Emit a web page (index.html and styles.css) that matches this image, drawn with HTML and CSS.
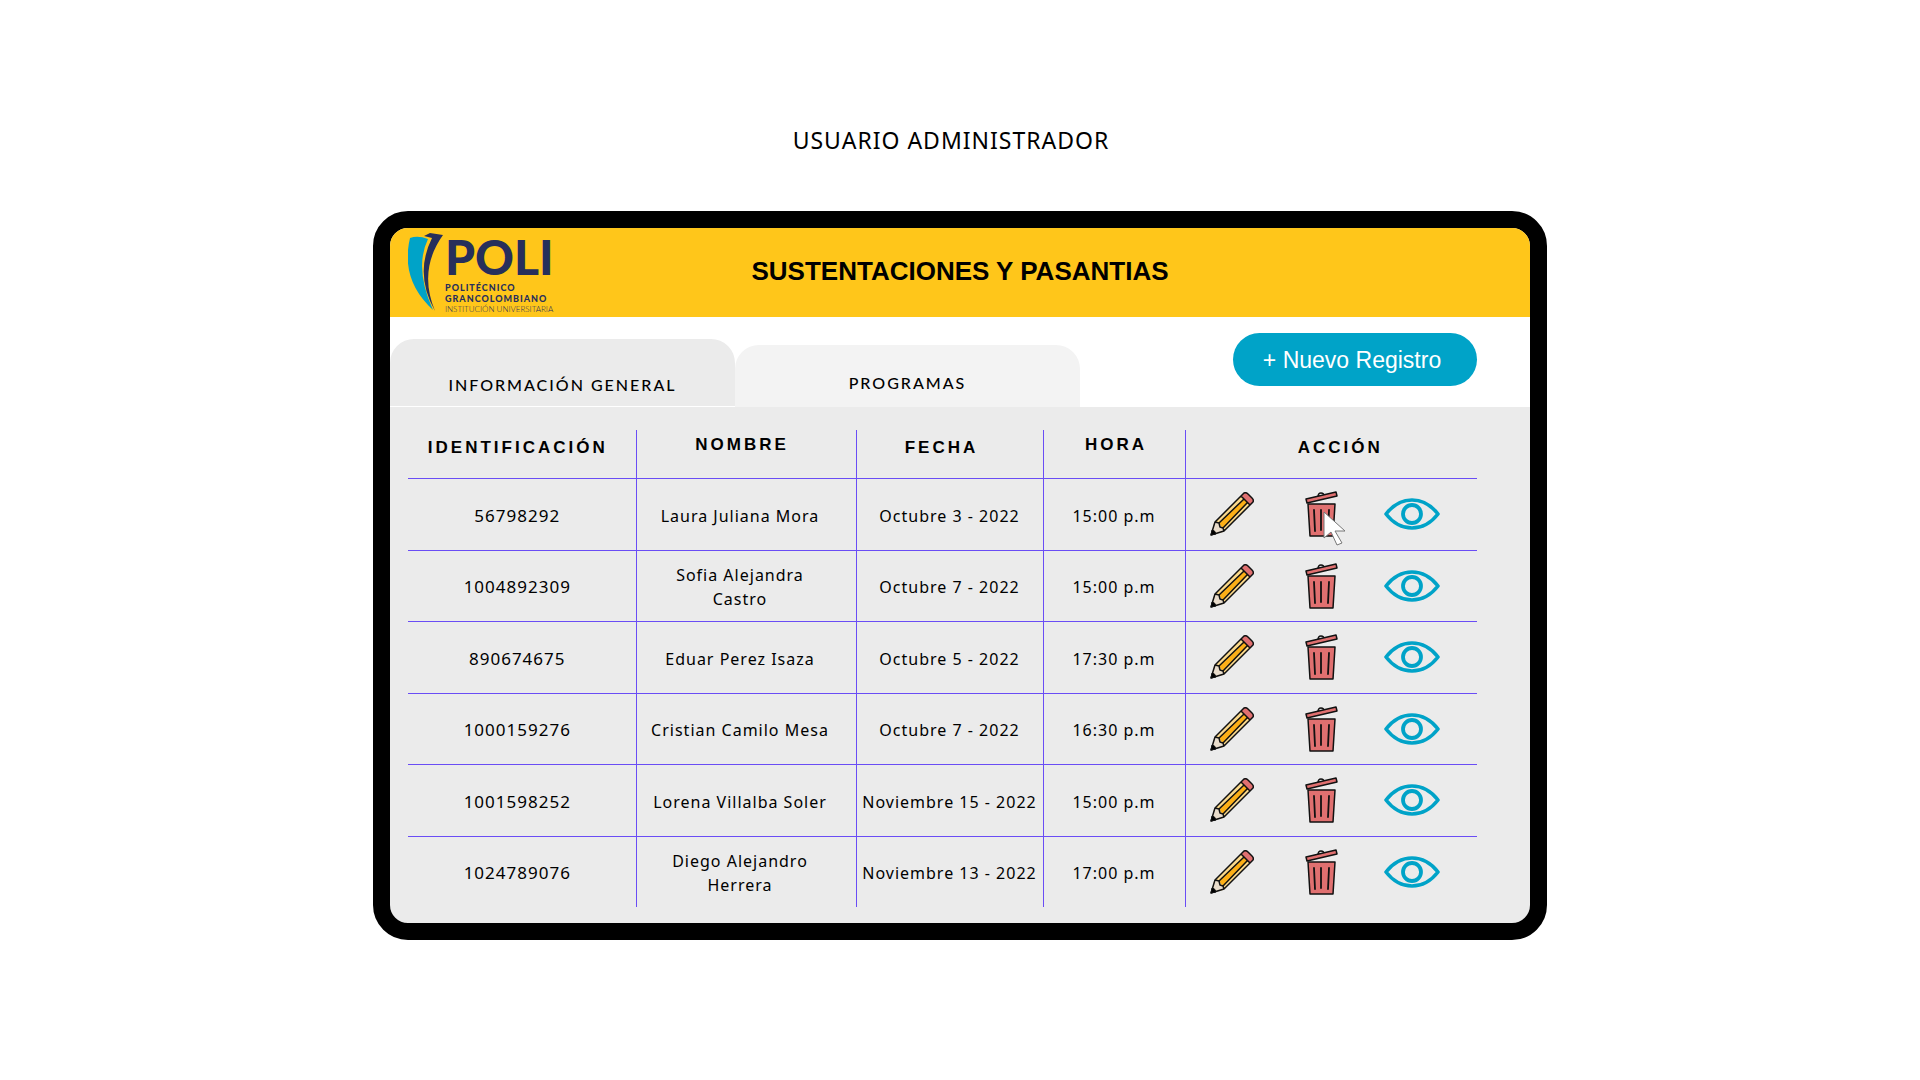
FILE: index.html
```html
<!DOCTYPE html>
<html lang="es">
<head>
<meta charset="utf-8">
<title>Sustentaciones y Pasantias</title>
<link rel="stylesheet" href="styles.css">
</head>
<body>
<svg class="sprite" aria-hidden="true">
  <symbol id="pencil" viewBox="0 0 44 44">
    <path d="M1 43 4 31 31 4 40 13 13 40Z" fill="#fbd98b"/>
    <path d="M9 31 34 7 38 11 13 36Z" fill="#fcaf17"/>
    <path d="M1 43 5 30 9 31 10 35 13 36 14 39Z" fill="#e9dccb"/>
    <path d="M31 4 34 1Q36 0 38 2L42 6Q44 8 43 10L40 13Z" fill="#e07070"/>
    <path d="M1 43 5 30 34 1Q36 0 38 2L42 6Q44 8 43 10L14 39ZM31 4 40 13M34 7 9 31M37 11 13 36M5 30 9 31 10 35 13 36 14 39" fill="none" stroke="#111" stroke-width="1.5" stroke-linejoin="round"/>
    <path d="M1 43 2 38Q5 38 6 42Z" stroke="#111"/>
  </symbol>
  <symbol id="trash" viewBox="0 0 34 46">
    <path d="M13 6Q13 2 16 2T19 5" fill="#fff" stroke="#111" stroke-width="1.5"/>
    <path d="M1 8 31 1 32 5 2 12Z" fill="#e07070" stroke="#111" stroke-width="1.5" stroke-linejoin="round"/>
    <path d="M3 13H30L28 45H5Z" fill="#e07070" stroke="#111" stroke-width="1.5" stroke-linejoin="round"/>
    <path d="M9 19 10 40M16 19V39M24 19 23 40" fill="none" stroke="#111" stroke-width="1.8" stroke-linecap="round"/>
  </symbol>
  <symbol id="eye" viewBox="0 0 56 32">
    <path d="M2 16C9 7 18 2 28 2S47 7 54 16C47 25 38 30 28 30S9 25 2 16Z" fill="none" stroke="#00a3c8" stroke-width="3.6" stroke-linejoin="round"/>
    <circle cx="28" cy="16" r="9" fill="none" stroke="#00a3c8" stroke-width="3.8"/>
  </symbol>
</svg>
<main class="page">
  <h1 class="role">USUARIO ADMINISTRADOR</h1>
  <div class="device">
    <header class="banner">
      <div class="logo">
        <svg class="logo-mark" viewBox="0 0 36 80" aria-hidden="true">
          <path d="M2 6Q10 3 20 7Q6 36 25 78Q-8 48 2 6Z" fill="#00a3c8"/>
          <path d="M16 4 22 1 35 3Q10 38 27 79Q6 42 24 6Z" fill="#272f5b"/>
        </svg>
        <div class="logo-text">
          <span class="logo-name">POLI</span>
          <span class="logo-line">POLITÉCNICO</span>
          <span class="logo-line">GRANCOLOMBIANO</span>
          <span class="logo-small">INSTITUCIÓN UNIVERSITARIA</span>
        </div>
      </div>
      <h2 class="title">SUSTENTACIONES Y PASANTIAS</h2>
    </header>
    <div class="toolbar">
      <nav class="tabs">
        <a class="tab tab-active" href="#general">INFORMACIÓN GENERAL</a>
        <a class="tab" href="#programas">PROGRAMAS</a>
      </nav>
      <button class="new" type="button">+ Nuevo Registro</button>
    </div>
    <section class="panel" id="general">
      <table class="records">
        <colgroup><col class="c-id"><col class="c-name"><col class="c-date"><col class="c-time"><col></colgroup>
        <thead>
          <tr><th>IDENTIFICACIÓN</th><th class="raised">NOMBRE</th><th class="h-date">FECHA</th><th class="raised h-time">HORA</th><th class="h-action">ACCIÓN</th></tr>
        </thead>
        <tbody>
          <tr><td>56798292</td><td>Laura Juliana Mora</td><td>Octubre 3 - 2022</td><td>15:00 p.m</td><td><div class="actions"><button type="button" aria-label="Editar"><svg class="pencil"><use href="#pencil"/></svg></button><button type="button" aria-label="Eliminar"><svg class="trash"><use href="#trash"/></svg><svg class="cursor" viewBox="0 0 24 36"><path d="M1 1V27L8 21 14 34 19 32 12 20 22 20Z" fill="#fff" stroke="#777" stroke-width="1"/></svg></button><button type="button" aria-label="Ver"><svg class="eye"><use href="#eye"/></svg></button></div></td></tr>
          <tr><td>1004892309</td><td>Sofia Alejandra Castro</td><td>Octubre 7 - 2022</td><td>15:00 p.m</td><td><div class="actions"><button type="button" aria-label="Editar"><svg class="pencil"><use href="#pencil"/></svg></button><button type="button" aria-label="Eliminar"><svg class="trash"><use href="#trash"/></svg></button><button type="button" aria-label="Ver"><svg class="eye"><use href="#eye"/></svg></button></div></td></tr>
          <tr><td>890674675</td><td>Eduar Perez Isaza</td><td>Octubre 5 - 2022</td><td>17:30 p.m</td><td><div class="actions"><button type="button" aria-label="Editar"><svg class="pencil"><use href="#pencil"/></svg></button><button type="button" aria-label="Eliminar"><svg class="trash"><use href="#trash"/></svg></button><button type="button" aria-label="Ver"><svg class="eye"><use href="#eye"/></svg></button></div></td></tr>
          <tr><td>1000159276</td><td>Cristian Camilo Mesa</td><td>Octubre 7 - 2022</td><td>16:30 p.m</td><td><div class="actions"><button type="button" aria-label="Editar"><svg class="pencil"><use href="#pencil"/></svg></button><button type="button" aria-label="Eliminar"><svg class="trash"><use href="#trash"/></svg></button><button type="button" aria-label="Ver"><svg class="eye"><use href="#eye"/></svg></button></div></td></tr>
          <tr><td>1001598252</td><td>Lorena Villalba Soler</td><td>Noviembre 15 - 2022</td><td>15:00 p.m</td><td><div class="actions"><button type="button" aria-label="Editar"><svg class="pencil"><use href="#pencil"/></svg></button><button type="button" aria-label="Eliminar"><svg class="trash"><use href="#trash"/></svg></button><button type="button" aria-label="Ver"><svg class="eye"><use href="#eye"/></svg></button></div></td></tr>
          <tr><td>1024789076</td><td>Diego Alejandro Herrera</td><td>Noviembre 13 - 2022</td><td>17:00 p.m</td><td><div class="actions"><button type="button" aria-label="Editar"><svg class="pencil"><use href="#pencil"/></svg></button><button type="button" aria-label="Eliminar"><svg class="trash"><use href="#trash"/></svg></button><button type="button" aria-label="Ver"><svg class="eye"><use href="#eye"/></svg></button></div></td></tr>
        </tbody>
      </table>
    </section>
  </div>
</main>
</body>
</html>
```
FILE: styles.css
```css
* { box-sizing: border-box; }
body { margin: 0; background: #fff; color: #000; font-family: "Noto Sans", sans-serif; }
.sprite { display: none; }
.page { display: flex; flex-direction: column; align-items: center; padding: 124px 32px 64px; }
.role { margin: 0 18px 55px 0; font-size: 23px; line-height: 32px; font-weight: 400; letter-spacing: 1px; }
.device { width: 100%; max-width: 1174px; border: 17px solid #000; border-radius: 35px; background: #ebebeb; overflow: hidden; }

.banner { display: grid; grid-template-columns: 1fr auto 1fr; align-items: center; height: 89px; padding: 0 18px; background: #ffc61a; }
.title { margin: 0; padding-bottom: 4px; font: 700 26px/32px "Liberation Sans", Arial, sans-serif; }
.logo { display: flex; gap: 1px; color: #272f5b; font-family: Lato, sans-serif; }
.logo-mark { width: 36px; height: 80px; }
.logo-text { display: flex; flex-direction: column; white-space: nowrap; }
.logo-name { font-size: 48px; line-height: 50px; font-weight: 900; }
.logo-line { font-size: 9px; line-height: 11px; font-weight: 900; letter-spacing: 1px; }
.logo-small { font-size: 8px; line-height: 10px; font-weight: 300; }

.toolbar { display: flex; justify-content: space-between; height: 90px; padding-right: 53px; background: #fff; }
.tabs { display: flex; align-items: flex-end; flex: 0 1 690px; }
.tab { flex: 1; height: 62px; padding-top: 26px; border-radius: 24px 24px 0 0; background: #f3f3f3; color: #000; font: 500 16px/24px Lato, sans-serif; letter-spacing: 2px; text-align: center; text-decoration: none; }
.tab-active { height: 68px; padding-top: 34px; border-bottom: 1px solid #fff; background: #ebebeb; }
.new { width: 244px; height: 53px; margin-top: 16px; padding: 0 6px 0 0; border: 0; border-radius: 27px; background: #00a3c8; color: #fff; font: 400 23px/32px "Liberation Sans", Arial, sans-serif; }

.panel { padding: 23px 53px 16px 18px; }
.records { width: 100%; table-layout: fixed; border-collapse: collapse; }
.c-id { width: 228px; }
.c-name { width: 220px; }
.c-date { width: 187px; }
.c-time { width: 142px; }
.records th, .records td { padding: 0; border: 1px solid #6a4df5; text-align: center; vertical-align: middle; }
.records tr > :first-child { border-left: 0; }
.records tr > :last-child { border-right: 0; }
.records th { height: 48px; padding: 0 8px 12px 0; border-top: 0; font: 700 17px/24px "Liberation Sans", Arial, sans-serif; letter-spacing: 3px; }
.records .raised { padding-bottom: 18px; }
.records .h-date { padding-right: 16px; }
.records .h-time { padding: 0 0 18px 4px; }
.records .h-action { padding-left: 24px; padding-right: 6px; }
.records td { height: 71px; padding-top: 3px; font-size: 16px; line-height: 24px; letter-spacing: 1px; }
.records tbody tr:nth-child(odd) td { height: 72px; }
.records tbody tr:last-child td { border-bottom: 0; }
.records td:first-child { padding-right: 9px; font-size: 17px; }
.records td:nth-child(2) { padding: 3px 24px 0 12px; }
.records td:nth-child(3), .records td:nth-child(4) { white-space: nowrap; }
.records td:last-child { padding: 0 0 0 1px; }

.actions { display: grid; grid-template-columns: repeat(3, 90px); justify-content: start; align-items: center; }
.actions button { position: relative; display: flex; justify-content: center; padding: 0; border: 0; background: none; }
.pencil { width: 44px; height: 44px; }
.trash { width: 34px; height: 46px; }
.eye { width: 56px; height: 32px; }
.cursor { position: absolute; top: 20px; left: 46px; width: 24px; height: 36px; }
```
